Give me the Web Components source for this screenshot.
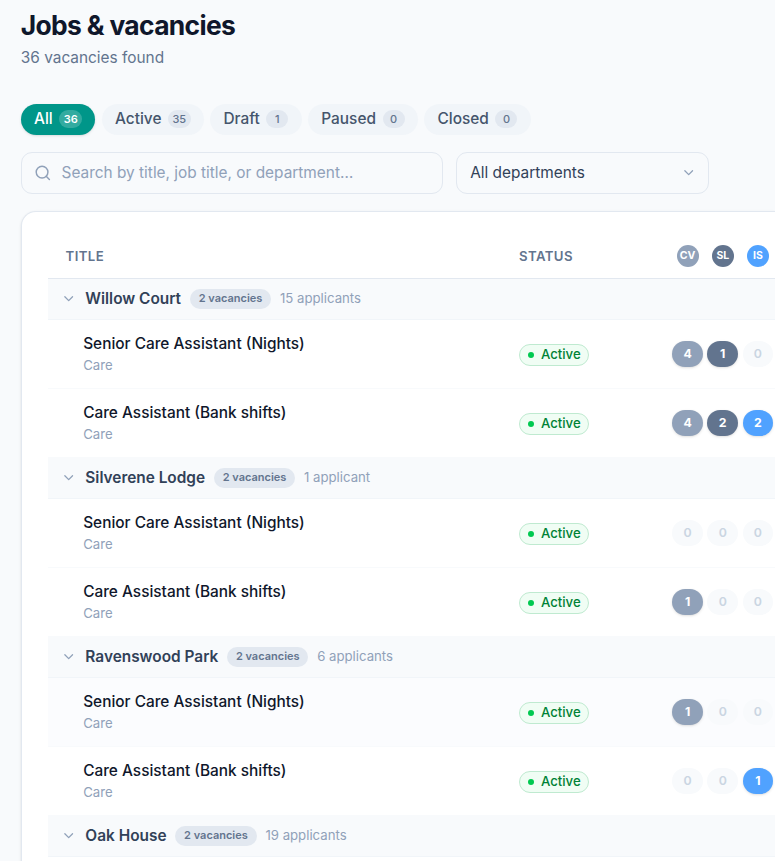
<!DOCTYPE html>
<html lang="en">
<head>
  <meta charset="UTF-8">
  <meta name="viewport" content="width=device-width, initial-scale=1.0">
  <title>Jobs &amp; vacancies</title>
  <style>
    html {
      font-size: 17.6px;
    }

    body {
      margin: 0;
      height: 861px;
      overflow: hidden;
      background: #f8fafc;
      color: #0f172b;
      font-family: Inter, "Liberation Sans", sans-serif;
      font-size: 15.4px;
      line-height: 22px;
    }
  </style>
</head>
<body>
  <jobs-page>
    <page-heading slot="heading" subtitle="36 vacancies found">Jobs &amp; vacancies</page-heading>
    <filter-tab slot="tabs" count="36" active>All</filter-tab>
    <filter-tab slot="tabs" count="35">Active</filter-tab>
    <filter-tab slot="tabs" count="1">Draft</filter-tab>
    <filter-tab slot="tabs" count="0">Paused</filter-tab>
    <filter-tab slot="tabs" count="0">Closed</filter-tab>
    <search-box slot="filters">Search by title, job title, or department…</search-box>
    <select-box slot="filters">All departments</select-box>
    <vacancy-table>
      <vacancy-group name="Willow Court" applicants="15 applicants">
        <vacancy-row stages="4,1,0">Senior Care Assistant (Nights)</vacancy-row>
        <vacancy-row stages="4,2,2">Care Assistant (Bank shifts)</vacancy-row>
      </vacancy-group>
      <vacancy-group name="Silverene Lodge" applicants="1 applicant">
        <vacancy-row stages="0,0,0">Senior Care Assistant (Nights)</vacancy-row>
        <vacancy-row stages="1,0,0">Care Assistant (Bank shifts)</vacancy-row>
      </vacancy-group>
      <vacancy-group name="Ravenswood Park" applicants="6 applicants">
        <vacancy-row stages="1,0,0" highlighted>Senior Care Assistant (Nights)</vacancy-row>
        <vacancy-row stages="0,0,1">Care Assistant (Bank shifts)</vacancy-row>
      </vacancy-group>
      <vacancy-group name="Oak House" applicants="19 applicants"></vacancy-group>
    </vacancy-table>
  </jobs-page>

  <script>
    const STAGE_COLORS = ['#90a1b9', '#62748e', '#50a2ff'];
    const CHEVRON = '<path d="m6 9 6 6 6-6"/>';

    function icon(paths, size) {
      return `<svg width="${size}" height="${size}" viewBox="0 0 24 24" fill="none" stroke="currentColor" stroke-width="2" stroke-linecap="round" stroke-linejoin="round">${paths}</svg>`;
    }

    class JobsPage extends HTMLElement {
      connectedCallback() {
        this.attachShadow({ mode: 'open' }).innerHTML = `
          <style>
            :host {
              display: block;
              box-sizing: border-box;
              height: 861px;
              overflow: hidden;
              padding: 8px 0 0 20.8px;
            }

            .tabs {
              display: flex;
              gap: 6.6px;
              margin-top: 35px;
            }

            .filters {
              display: flex;
              gap: 13px;
              margin: 17px 0;
            }
          </style>
          <slot name="heading"></slot>
          <div class="tabs"><slot name="tabs"></slot></div>
          <div class="filters"><slot name="filters"></slot></div>
          <slot></slot>
        `;
      }
    }

    class PageHeading extends HTMLElement {
      connectedCallback() {
        this.attachShadow({ mode: 'open' }).innerHTML = `
          <style>
            :host {
              display: block;
            }

            h1 {
              margin: 0;
              font-size: 26.4px;
              font-weight: 700;
              line-height: 35px;
              letter-spacing: -0.025em;
            }

            p {
              margin: 4px 0 0;
              color: #62748e;
            }
          </style>
          <h1><slot></slot></h1>
          <p>${this.getAttribute('subtitle')}</p>
        `;
      }
    }

    class FilterTab extends HTMLElement {
      connectedCallback() {
        this.attachShadow({ mode: 'open' }).innerHTML = `
          <style>
            :host {
              display: flex;
              align-items: center;
              gap: 6.6px;
              height: 31px;
              box-sizing: border-box;
              padding: 0 13.2px 1px;
              border-radius: 16px;
              background: #f1f5f9;
              color: #45556c;
              font-weight: 500;
            }

            :host([active]) {
              background: #009689;
              color: #fff;
              box-shadow: 0 1px 3px rgba(0, 0, 0, 0.1), 0 1px 2px -1px rgba(0, 0, 0, 0.1);
            }

            .count {
              box-sizing: border-box;
              min-width: 22px;
              height: 18px;
              padding: 0 4.4px;
              border-radius: 9px;
              background: #e2e8f0;
              color: #62748e;
              font-size: 11px;
              line-height: 18px;
              font-weight: 500;
              text-align: center;
            }

            :host([active]) .count {
              background: rgba(255, 255, 255, 0.2);
              color: #fff;
              font-weight: 600;
            }
          </style>
          <slot></slot>
          <span class="count">${this.getAttribute('count')}</span>
        `;
      }
    }

    class SearchBox extends HTMLElement {
      connectedCallback() {
        this.attachShadow({ mode: 'open' }).innerHTML = `
          <style>
            :host {
              display: flex;
              align-items: center;
              gap: 10px;
              box-sizing: border-box;
              width: 422px;
              height: 42px;
              padding: 0 12.2px;
              border: 1px solid #e2e8f0;
              border-radius: 11px;
              color: #90a1b9;
            }
          </style>
          ${icon('<circle cx="11" cy="11" r="8"/><path d="m21 21-4.34-4.34"/>', 17.6)}
          <slot></slot>
        `;
      }
    }

    class SelectBox extends HTMLElement {
      connectedCallback() {
        this.attachShadow({ mode: 'open' }).innerHTML = `
          <style>
            :host {
              display: flex;
              align-items: center;
              justify-content: space-between;
              box-sizing: border-box;
              width: 253px;
              height: 42px;
              padding: 0 11px 0 13.4px;
              border: 1px solid #e2e8f0;
              border-radius: 11px;
              color: #314158;
            }

            svg {
              color: #90a1b9;
            }
          </style>
          <slot></slot>
          ${icon(CHEVRON, 15.4)}
        `;
      }
    }

    class VacancyTable extends HTMLElement {
      connectedCallback() {
        const badges = ['CV', 'SL', 'IS']
          .map((label, i) => `<span class="badge" style="background: ${STAGE_COLORS[i]}">${label}</span>`)
          .join('');

        this.attachShadow({ mode: 'open' }).innerHTML = `
          <style>
            :host {
              display: block;
              height: 700px;
              padding: 22px 0 0 26.2px;
              border: 1px solid #e2e8f0;
              border-right: none;
              border-radius: 15px 0 0 0;
              background: #fff;
              box-shadow: 0 1px 3px rgba(0, 0, 0, 0.1), 0 1px 2px -1px rgba(0, 0, 0, 0.1);
            }

            .header {
              display: grid;
              grid-template-columns: 453.4px 157.7px auto;
              align-items: center;
              height: 44px;
              padding-left: 17.6px;
              border-bottom: 1px solid #e2e8f0;
              color: #62748e;
              font-size: 13.2px;
              font-weight: 600;
              letter-spacing: 0.4px;
            }

            .badges {
              display: flex;
              gap: 13.2px;
            }

            .badge {
              flex: none;
              width: 22px;
              height: 22px;
              border-radius: 50%;
              color: #fff;
              font-size: 10.5px;
              line-height: 22px;
              font-weight: 700;
              letter-spacing: 0;
              text-align: center;
            }
          </style>
          <div class="header">
            <span>TITLE</span>
            <span>STATUS</span>
            <div class="badges">${badges}</div>
          </div>
          <slot></slot>
        `;
      }
    }

    class VacancyGroup extends HTMLElement {
      connectedCallback() {
        this.attachShadow({ mode: 'open' }).innerHTML = `
          <style>
            :host {
              display: block;
            }

            .bar {
              display: flex;
              align-items: center;
              gap: 8.8px;
              height: 40px;
              padding-left: 13.2px;
              border-bottom: 1px solid #f1f5f9;
              background: #f8fafc;
            }

            svg,
            .applicants {
              color: #90a1b9;
            }

            .name {
              color: #314158;
              font-weight: 600;
            }

            .total {
              height: 20px;
              padding: 0 8.8px;
              border-radius: 10px;
              background: #e2e8f0;
              color: #62748e;
              font-size: 11px;
              line-height: 19px;
              font-weight: 600;
            }

            .applicants {
              font-size: 13.2px;
              line-height: 18px;
              padding-bottom: 2px;
            }
          </style>
          <div class="bar">
            ${icon(CHEVRON, 15.4)}
            <span class="name">${this.getAttribute('name')}</span>
            <span class="total">2 vacancies</span>
            <span class="applicants">${this.getAttribute('applicants')}</span>
          </div>
          <slot></slot>
        `;
      }
    }

    class VacancyRow extends HTMLElement {
      connectedCallback() {
        const stages = this.getAttribute('stages').split(',');
        const pills = stages
          .map((count, i) => count === '0'
            ? '<span class="pill">0</span>'
            : `<span class="pill filled" style="background: ${STAGE_COLORS[i]}">${count}</span>`)
          .join('');

        this.attachShadow({ mode: 'open' }).innerHTML = `
          <style>
            :host {
              display: grid;
              grid-template-columns: 435.6px 153.4px auto;
              align-items: center;
              height: 68px;
              padding-left: 35.2px;
              border-bottom: 1px solid #f8fafc;
            }

            :host([highlighted]) {
              background: #fbfcfe;
            }

            .title {
              font-weight: 500;
            }

            .department {
              margin: 1px 0;
              color: #90a1b9;
              font-size: 13.2px;
              line-height: 18px;
            }

            .status {
              display: flex;
              align-items: center;
              gap: 6.8px;
              box-sizing: border-box;
              width: 70.4px;
              height: 22px;
              margin-top: 2px;
              padding-left: 7.8px;
              border: 1px solid #bfead0;
              border-radius: 11px;
              background: #f0fdf4;
              color: #008236;
              font-size: 13.2px;
              line-height: 18px;
              font-weight: 500;
            }

            .label {
              padding-bottom: 2px;
            }

            .dot {
              width: 6.6px;
              height: 6.6px;
              border-radius: 50%;
              background: #00c950;
            }

            .pills {
              display: flex;
              gap: 4.4px;
            }

            .pill {
              flex: none;
              width: 30.8px;
              height: 26px;
              border-radius: 13px;
              background: #f8fafc;
              color: #cad5e2;
              font-size: 12.3px;
              line-height: 26px;
              font-weight: 600;
              text-align: center;
            }

            .filled {
              color: #fff;
              font-weight: 700;
              box-shadow: 0 1px 3px rgba(0, 0, 0, 0.1), 0 1px 2px -1px rgba(0, 0, 0, 0.1);
            }
          </style>
          <div>
            <div class="title"><slot></slot></div>
            <div class="department">Care</div>
          </div>
          <div class="status"><span class="dot"></span><span class="label">Active</span></div>
          <div class="pills">${pills}</div>
        `;
      }
    }

    customElements.define('jobs-page', JobsPage);
    customElements.define('page-heading', PageHeading);
    customElements.define('filter-tab', FilterTab);
    customElements.define('search-box', SearchBox);
    customElements.define('select-box', SelectBox);
    customElements.define('vacancy-table', VacancyTable);
    customElements.define('vacancy-group', VacancyGroup);
    customElements.define('vacancy-row', VacancyRow);
  </script>
</body>
</html>
